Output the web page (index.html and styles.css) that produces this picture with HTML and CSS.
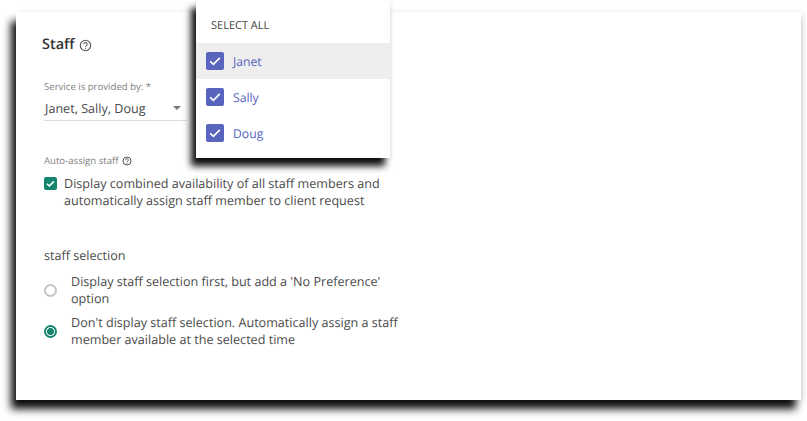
FILE: index.html
```html
<!DOCTYPE html>
<html lang="en">
<head>
<meta charset="utf-8">
<title>Staff</title>
<link rel="stylesheet" href="styles.css">
</head>
<body>
<main class="card">
  <h2 class="title">Staff
    <svg class="help" viewBox="0 0 14 14" width="13" height="13"><circle cx="7" cy="7" r="5.6" fill="none" stroke="#555" stroke-width="1.2"/><path d="M5.2 5.6a1.8 1.8 0 1 1 2.7 1.5c-.6.4-.9.7-.9 1.3" fill="none" stroke="#555" stroke-width="1.1"/><circle cx="7" cy="10" r=".7" fill="#555"/></svg>
  </h2>
  <div class="field">
    <div class="field-label">Service is provided by: *</div>
    <div class="select"><span>Janet, Sally, Doug</span><i class="caret"></i></div>
  </div>
  <div class="auto">
    <div class="field-label">Auto-assign staff
      <svg class="help-small" viewBox="0 0 14 14" width="10" height="10"><circle cx="7" cy="7" r="5.6" fill="none" stroke="#555" stroke-width="1.4"/><path d="M5.2 5.6a1.8 1.8 0 1 1 2.7 1.5c-.6.4-.9.7-.9 1.3" fill="none" stroke="#555" stroke-width="1.3"/><circle cx="7" cy="10" r=".8" fill="#555"/></svg>
    </div>
    <div class="check-row">
      <span class="box box-green"><svg viewBox="0 0 14 14" width="13" height="13"><path d="M3.2 7.3l2.5 2.4 5-5" fill="none" stroke="#fff" stroke-width="1.7"/></svg></span>
      <p>Display combined availability of all staff members and automatically assign staff member to client request</p>
    </div>
  </div>
  <section class="selection">
    <div class="sel-title">staff selection</div>
    <div class="radio-row"><span class="radio"></span><p>Display staff selection first, but add a 'No Preference' option</p></div>
    <div class="radio-row"><span class="radio on"></span><p>Don't display staff selection. Automatically assign a staff member available at the selected time</p></div>
  </section>
</main>
<div class="menu">
  <div class="select-all">SELECT ALL</div>
  <div class="opt active"><span class="box box-blue"><svg viewBox="0 0 18 18" width="18" height="18"><path d="M4.2 9.4l3.2 3 6.4-6.6" fill="none" stroke="#fff" stroke-width="1.7"/></svg></span>Janet</div>
  <div class="opt"><span class="box box-blue"><svg viewBox="0 0 18 18" width="18" height="18"><path d="M4.2 9.4l3.2 3 6.4-6.6" fill="none" stroke="#fff" stroke-width="1.7"/></svg></span>Sally</div>
  <div class="opt"><span class="box box-blue"><svg viewBox="0 0 18 18" width="18" height="18"><path d="M4.2 9.4l3.2 3 6.4-6.6" fill="none" stroke="#fff" stroke-width="1.7"/></svg></span>Doug</div>
</div>
</body>
</html>
```

FILE: styles.css
```css
* { box-sizing: border-box; }
html, body { margin: 0; height: 421px; overflow: hidden; background: #fff; }
body {
  padding: 12px 6px 21px 16px;
  font-family: "Open Sans", "Noto Sans", sans-serif;
  color: #4a4a4a;
  font-size: 12.6px;
  line-height: 17px;
  text-rendering: geometricPrecision;
}
p { margin: 0; }
.card {
  height: 388px;
  background: #fff;
  padding: 23px 0 0 26px;
  box-shadow: -5px 9px 8px 0 rgba(0,0,0,.95), 3px 0 6px rgba(0,0,0,.08);
}
.title {
  margin: 0;
  display: flex;
  align-items: center;
  gap: 4px;
  font-size: 14.5px;
  font-weight: 600;
  line-height: 20px;
  color: #333;
}
.field { margin: 25px 0 0 2px; width: 143px; }
.field-label { font-size: 9.6px; line-height: 14px; color: #808080; display: flex; align-items: center; gap: 3px; }
.select {
  display: flex;
  align-items: center;
  justify-content: space-between;
  height: 27px;
  padding: 2px 6px 0 1px;
  border-bottom: 1px solid #ddd;
}
.caret { width: 0; height: 0; border: 4px solid transparent; border-top: 4px solid #777; border-bottom: 0; }
.auto { margin: 33px 0 0 2px; }
.check-row { display: flex; gap: 7px; margin-top: 7px; width: 345px; }
.box { flex: none; display: flex; align-items: center; justify-content: center; border-radius: 2px; }
.box-green { width: 13px; height: 13px; background: #16856f; margin-top: 2px; }
.selection { margin: 38px 0 0 2px; }
.sel-title { line-height: 18px; }
.radio-row { display: flex; align-items: center; gap: 14px; width: 358px; margin-top: 7px; }
.sel-title + .radio-row { margin-top: 8px; }
.radio { flex: none; width: 13px; height: 13px; border: 2px solid #c4c4c4; border-radius: 50%; }
.radio.on { border-color: #16856f; background: radial-gradient(circle, #16856f 3.2px, #fff 3.8px); }
.menu {
  position: absolute;
  left: 196px;
  top: 0;
  width: 194px;
  height: 158px;
  background: #fff;
  box-shadow: -5px 8px 7px 0 rgba(0,0,0,.95), 1px 0 4px rgba(0,0,0,.06);
}
.select-all { height: 43px; padding: 18px 0 0 15px; font-size: 11px; line-height: 16px; color: #444; }
.opt { display: flex; align-items: center; height: 36px; padding-left: 10px; gap: 9px; color: #5463bd; font-size: 12.2px; }
.opt.active { background: #eee; }
.box-blue { width: 18px; height: 18px; background: #5864bd; }
```
